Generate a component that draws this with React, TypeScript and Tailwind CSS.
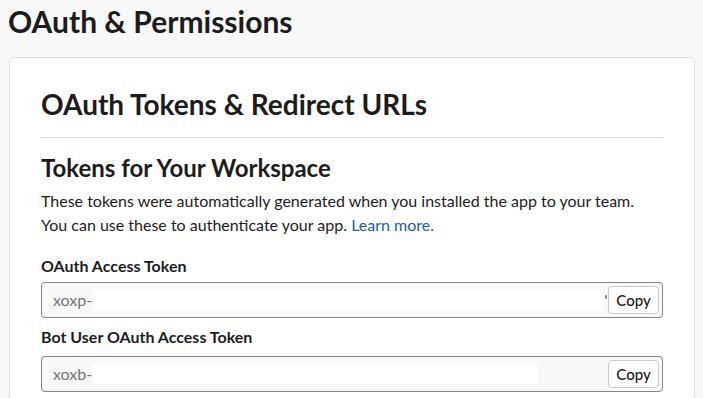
import React from "react";

function TokenField({ prefix, blockWidth, stub }: { prefix: string; blockWidth: number; stub?: boolean }) {
  return (
    <div className="flex h-[36px] items-center rounded-[4px] border border-[#868686] bg-[#f8f8f8] pl-[11px] pr-[3px]">
      <span className="w-[40px] overflow-hidden whitespace-nowrap text-[16px] leading-[20px] text-[#757575]">{prefix}</span>
      <div className="h-[20px] bg-white" style={{ width: blockWidth }} />
      <div className="flex-1" />
      {stub && <div className="mr-[1px] mb-[6px] h-[4px] w-[2px] rounded-full bg-[#888]" />}
      <button className="h-[28px] w-[51px] rounded-[4px] border border-[#c9c9c9] bg-white text-[15px] font-medium leading-none text-[#1d1c1d]">
        Copy
      </button>
    </div>
  );
}

export default function App() {
  return (
    <div className="min-h-screen bg-[#f8f8f8] font-['Lato',sans-serif] text-[#1d1c1d]">
      <h1 className="pl-[8px] pt-[1px] text-[30px] font-bold leading-[40px]">OAuth &amp; Permissions</h1>
      <div className="ml-[9px] mr-[8px] mt-[16px] rounded-[5px] border border-[#dddddd] bg-white px-[31px] pt-[28px] pb-[8px]">
        <h2 className="text-[28px] font-bold leading-[36px]">OAuth Tokens &amp; Redirect URLs</h2>
        <div className="mt-[15px] border-t border-[#dddddd]" />
        <h3 className="mt-[14px] text-[24px] font-bold leading-[32px]">Tokens for Your Workspace</h3>
        <p className="mt-[5px] text-[16px] leading-[24px]">
          These tokens were automatically generated when you installed the app to your team.
          <br />
          You can use these to authenticate your app.{" "}
          <span className="text-[#1264a3]">Learn more.</span>
        </p>
        <div className="mt-[17px] text-[16px] font-bold leading-[24px]">OAuth Access Token</div>
        <div className="mt-[4px]">
          <TokenField prefix="xoxp-" blockWidth={510} stub />
        </div>
        <div className="mt-[7px] text-[16px] font-bold leading-[24px]">Bot User OAuth Access Token</div>
        <div className="mt-[7px]">
          <TokenField prefix="xoxb-" blockWidth={445} />
        </div>
      </div>
    </div>
  );
}
